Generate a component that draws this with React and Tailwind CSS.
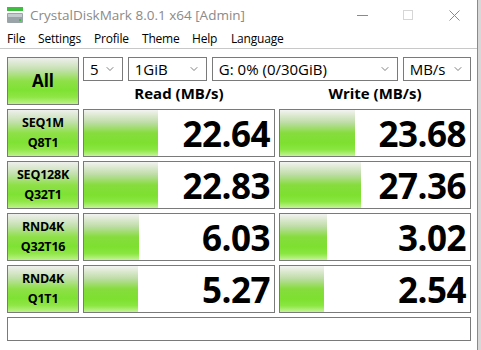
import { ChevronDown } from "lucide-react";

const rows = [
  { a: "SEQ1M", b: "Q8T1", read: "22.64", rw: 74, write: "23.68", ww: 75 },
  { a: "SEQ128K", b: "Q32T1", read: "22.83", rw: 74, write: "27.36", ww: 81 },
  { a: "RND4K", b: "Q32T16", read: "6.03", rw: 55, write: "3.02", ww: 47 },
  { a: "RND4K", b: "Q1T1", read: "5.27", rw: 54, write: "2.54", ww: 44 },
];

const greenBtn =
  "bg-[linear-gradient(to_bottom,#eef0ec_0%,#c4e0b0_25%,#8ee048_50%,#7ee232_70%,#8ee644_85%,#bdf28a_100%)]";
const greenBar =
  "bg-[linear-gradient(to_bottom,#f2f3f0_0%,#bcdca4_28%,#86dc3c_50%,#7ee030_72%,#8ae640_86%,#c4f496_100%)]";

const Select = ({ label, className }) => (
  <div
    className={`h-[24px] border border-[#7a7a7a] bg-white flex items-center justify-between pl-[6px] pr-[6px] text-[15px] text-black ${className}`}
  >
    <span>{label}</span>
    <ChevronDown size={12} strokeWidth={1.5} className="text-[#555]" />
  </div>
);

const ResultCell = ({ value, width }) => (
  <div className="relative h-[48px] border border-[#7a7a7a] bg-white flex items-center justify-end pr-[4px]">
    <div className={`absolute left-0 top-0 bottom-0 ${greenBar}`} style={{ width }} />
    <span className="relative font-bold text-[35px] leading-none tracking-[-0.5px]">{value}</span>
  </div>
);

export default function App() {
  return (
    <div className="w-[481px] h-[350px] overflow-hidden bg-[#d8d8d8] flex font-['Open_Sans',sans-serif]">
      <div className="w-[478px] h-full bg-white flex flex-col border-r border-[#8a8a8a]">
        {/* Title bar */}
        <div className="h-[30px] flex items-center pl-[7px] shrink-0">
          <svg width="17" height="16" viewBox="0 0 17 16" className="mr-[6px]">
            <rect x="0" y="0" width="16" height="4" fill="#3fbf3f" />
            <rect x="0" y="6" width="16" height="10" rx="1" fill="#9aa3a8" />
            <rect x="1" y="7" width="14" height="3" fill="#c4cbcf" />
            <rect x="12" y="12" width="2" height="2" fill="#3fbf3f" />
          </svg>
          <span className="text-[13.5px] text-[#8a8a8a]">CrystalDiskMark 8.0.1 x64 [Admin]</span>
          <div className="ml-auto flex items-center h-full">
            <div className="w-[46px] h-full flex items-center justify-center">
              <div className="w-[11px] h-px bg-[#8a8a8a]" />
            </div>
            <div className="w-[46px] h-full flex items-center justify-center">
              <div className="w-[10px] h-[10px] border border-[#d6d6d6]" />
            </div>
            <div className="w-[46px] h-full flex items-center justify-center">
              <svg width="11" height="11" viewBox="0 0 11 11">
                <path d="M0.5 0.5 L10.5 10.5 M10.5 0.5 L0.5 10.5" stroke="#8a8a8a" strokeWidth="1" />
              </svg>
            </div>
          </div>
        </div>

        {/* Menu */}
        <div className="h-[18px] flex items-center pl-[7px] text-[12px] tracking-[-0.2px] text-black shrink-0">
          <span className="w-[31px]">File</span>
          <span className="w-[56px]">Settings</span>
          <span className="w-[48px]">Profile</span>
          <span className="w-[50px]">Theme</span>
          <span className="w-[39px]">Help</span>
          <span>Language</span>
        </div>
        <div className="h-px bg-[#c8c8c8] shrink-0" />

        {/* Content */}
        <div className="pl-[7px] pt-[8px] flex flex-col gap-[4px]">
          <div className="grid grid-cols-[72px_192px_192px] gap-x-[4px]">
            <div
              className={`h-[48px] border border-[#7a7a7a] flex items-center justify-center font-bold text-[17px] ${greenBtn}`}
            >
              All
            </div>
            <div className="col-span-2 flex flex-col">
              <div className="flex gap-[5px]">
                <Select label="5" className="w-[40px]" />
                <Select label="1GiB" className="w-[80px]" />
                <Select label="G: 0% (0/30GiB)" className="w-[188px]" />
                <Select label="MB/s" className="w-[69px]" />
              </div>
              <div className="grid grid-cols-2 gap-x-[4px] flex-1">
                <div className="flex items-center justify-center font-bold text-[15px] pt-[1px]">Read (MB/s)</div>
                <div className="flex items-center justify-center font-bold text-[15px] pt-[1px]">Write (MB/s)</div>
              </div>
            </div>
          </div>

          {rows.map((r, i) => (
            <div key={i} className="grid grid-cols-[72px_192px_192px] gap-x-[4px]">
              <div
                className={`h-[48px] border border-[#7a7a7a] flex flex-col items-center justify-center font-bold text-[12.5px] tracking-[-0.2px] leading-[20px] ${greenBtn}`}
              >
                <span>{r.a}</span>
                <span>{r.b}</span>
              </div>
              <ResultCell value={r.read} width={r.rw} />
              <ResultCell value={r.write} width={r.ww} />
            </div>
          ))}

          <div className="w-[464px] h-[24px] border border-[#7a7a7a] bg-white" />
        </div>
      </div>
    </div>
  );
}
